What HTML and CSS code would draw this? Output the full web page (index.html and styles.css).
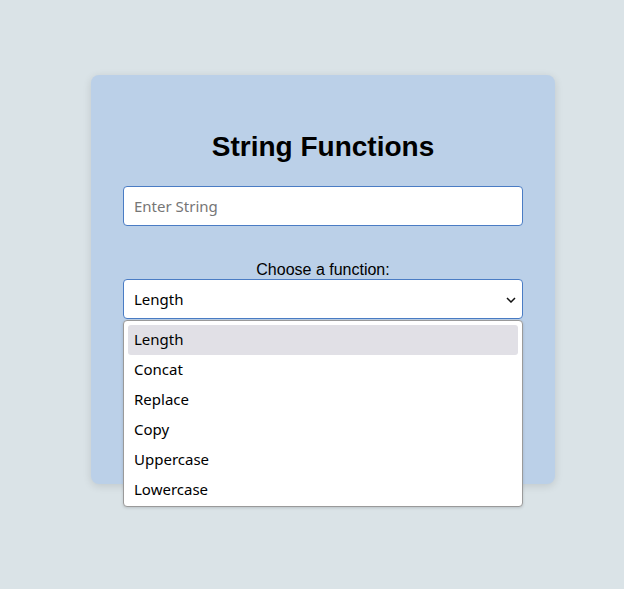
FILE: index.html
```html
<!DOCTYPE html>
<html lang="en">
<head>
<meta charset="utf-8">
<title>String Functions</title>
<link rel="stylesheet" href="styles.css">
</head>
<body>
<div class="card">
  <h1 class="title">String Functions</h1>
  <div class="field"><span class="placeholder">Enter String</span></div>
  <div class="label">Choose a function:</div>
  <div class="select-wrap">
    <div class="select">
      <span>Length</span>
      <svg class="chev" width="10" height="6" viewBox="0 0 10 6"><path d="M1 1 L5 5 L9 1" fill="none" stroke="#111" stroke-width="1.5"/></svg>
    </div>
    <ul class="menu">
      <li class="item active">Length</li>
      <li class="item">Concat</li>
      <li class="item">Replace</li>
      <li class="item">Copy</li>
      <li class="item">Uppercase</li>
      <li class="item">Lowercase</li>
    </ul>
  </div>
</div>
</body>
</html>
```
FILE: styles.css
```css
html, body {
  margin: 0;
  padding: 0;
}
body {
  background: #dae3e7;
  display: flex;
  justify-content: center;
  align-items: flex-start;
  padding-top: 75px;
  padding-left: 22px;
  min-height: 589px;
  box-sizing: border-box;
  font-family: "Liberation Sans", Arial, sans-serif;
}
.card {
  width: 400px;
  padding: 56px 32px 165px;
  background: #bbd0e8;
  border-radius: 8px;
  box-shadow: 0 2px 8px rgba(0, 0, 0, 0.12);
}
.title {
  margin: 0 0 23px;
  font-size: 28px;
  line-height: 32px;
  font-weight: bold;
  text-align: center;
  color: #000;
}
.field {
  height: 40px;
  box-sizing: border-box;
  background: #fff;
  border: 1px solid #4a7cc4;
  border-radius: 4px;
  display: flex;
  align-items: center;
  padding-left: 10px;
  font-family: "Noto Sans", "Open Sans", sans-serif;
  font-size: 15px;
}
.placeholder {
  color: #767676;
}
.label {
  margin-top: 35px;
  height: 18px;
  line-height: 18px;
  text-align: center;
  font-size: 16px;
  color: #000;
}
.select-wrap {
  position: relative;
}
.select {
  height: 40px;
  box-sizing: border-box;
  background: #fff;
  border: 1px solid #4a7cc4;
  border-radius: 4px;
  display: flex;
  align-items: center;
  justify-content: space-between;
  padding: 0 6px 0 10px;
  font-family: "Noto Sans", "Open Sans", sans-serif;
  font-size: 15px;
  color: #000;
}
.chev {
  display: block;
  margin-top: 1px;
}
.menu {
  position: absolute;
  top: 41px;
  left: 0;
  right: 0;
  margin: 0;
  padding: 4px 4px 1px;
  list-style: none;
  background: #fff;
  border: 1px solid #9a9a9a;
  border-radius: 4px;
  box-shadow: 0 1px 3px rgba(0, 0, 0, 0.15);
  font-family: "Noto Sans", "Open Sans", sans-serif;
  font-size: 15px;
  color: #000;
}
.item {
  height: 30px;
  line-height: 29px;
  padding-left: 6px;
  border-radius: 3px;
}
.item.active {
  background: #e1e0e6;
}
```
